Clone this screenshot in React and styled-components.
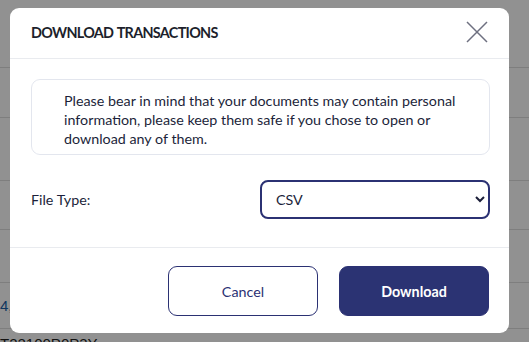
import React from 'react'
import styled, { createGlobalStyle } from 'styled-components'

const GlobalStyle = createGlobalStyle`
  *, *::before, *::after {
    box-sizing: border-box;
  }
  html, body {
    margin: 0;
    padding: 0;
    width: 529px;
    height: 342px;
    overflow: hidden;
    font-family: 'Lato', 'Liberation Sans', sans-serif;
  }
`

const Page = styled.div`
  position: relative;
  width: 529px;
  height: 342px;
  background: #fff;
  overflow: hidden;
`

const TableRow = styled.div`
  height: ${p => p.h}px;
  border-bottom: ${p => (p.last ? '0' : '1px solid #ddd')};
  display: flex;
  align-items: ${p => (p.last ? 'flex-start' : 'center')};
  padding-top: ${p => (p.last ? '6px' : '0')};
  font-size: 15px;
  line-height: 17px;
  color: ${p => p.color || '#222'};
  font-family: 'Liberation Sans', sans-serif;
`

const Overlay = styled.div`
  position: absolute;
  inset: 0;
  background: rgba(0, 0, 0, 0.43);
  display: flex;
  align-items: flex-start;
  justify-content: flex-start;
  padding: 8px 0 0 10px;
`

const Modal = styled.div`
  width: 499px;
  height: 325px;
  background: #fff;
  border-radius: 9px;
  display: flex;
  flex-direction: column;
  overflow: hidden;
`

const Header = styled.div`
  height: 51px;
  flex: none;
  border-bottom: 1px solid #e9ebef;
  display: flex;
  align-items: center;
  justify-content: space-between;
  padding: 0 21px 2px 21px;
`

const Title = styled.h2`
  margin: 0;
  font-size: 14.4px;
  font-weight: 700;
  color: #1d1f2c;
  letter-spacing: -0.7px;
  word-spacing: 1px;
`

const CloseButton = styled.button`
  border: 0;
  background: none;
  padding: 0;
  width: 22px;
  height: 22px;
  display: flex;
  cursor: pointer;
`

const Body = styled.div`
  flex: 1;
  padding: 20px 19px 0 21px;
  border-bottom: 1px solid #e9ebef;
`

const Notice = styled.div`
  border: 1px solid #e3e6ee;
  border-radius: 9px;
  padding: 11px 20px 6px 32px;
  font-size: 14.3px;
  line-height: 19px;
  color: #1c1f3a;
`

const Row = styled.div`
  margin-top: 25px;
  display: flex;
  align-items: center;
  justify-content: space-between;
`

const Label = styled.label`
  font-size: 14.3px;
  color: #1c1f3a;
`

const Select = styled.select`
  width: 230px;
  height: 39px;
  border: 2px solid #2b3173;
  border-radius: 8px;
  background: #fff;
  padding: 0 6px 0 10px;
  font-size: 14.3px;
  font-family: inherit;
  color: #1c1f3a;
`

const Footer = styled.div`
  height: 85px;
  flex: none;
  display: flex;
  align-items: flex-start;
  justify-content: flex-end;
  gap: 21px;
  padding: 18px 20px 0 0;
`

const Button = styled.button`
  width: 150px;
  height: 50px;
  border-radius: 9px;
  font-family: inherit;
  font-size: 14.3px;
  cursor: pointer;
  border: 1px solid #2b3173;
  background: ${p => (p.primary ? '#2b3373' : '#fff')};
  color: ${p => (p.primary ? '#fff' : '#2b3173')};
  font-weight: ${p => (p.primary ? 700 : 400)};
`

export default function App() {
  return (
    <Page>
      <GlobalStyle />
      <TableRow h={68} />
      <TableRow h={50} />
      <TableRow h={63} />
      <TableRow h={49} />
      <TableRow h={53} />
      <TableRow h={46} color="#1b5fa8">4,</TableRow>
      <TableRow h={30} last>T22100P0P3Y</TableRow>
      <Overlay>
        <Modal>
          <Header>
            <Title>DOWNLOAD TRANSACTIONS</Title>
            <CloseButton aria-label="Close">
              <svg width="22" height="22" viewBox="0 0 22 22">
                <path d="M1 1L21 21M21 1L1 21" stroke="#6e7080" strokeWidth="1.5" fill="none" />
              </svg>
            </CloseButton>
          </Header>
          <Body>
            <Notice>
              Please bear in mind that your documents may contain personal information, please keep them safe if you chose to open or download any of them.
            </Notice>
            <Row>
              <Label>File Type:</Label>
              <Select defaultValue="csv">
                <option value="csv">CSV</option>
                <option value="pdf">PDF</option>
              </Select>
            </Row>
          </Body>
          <Footer>
            <Button>Cancel</Button>
            <Button primary>Download</Button>
          </Footer>
        </Modal>
      </Overlay>
    </Page>
  )
}
